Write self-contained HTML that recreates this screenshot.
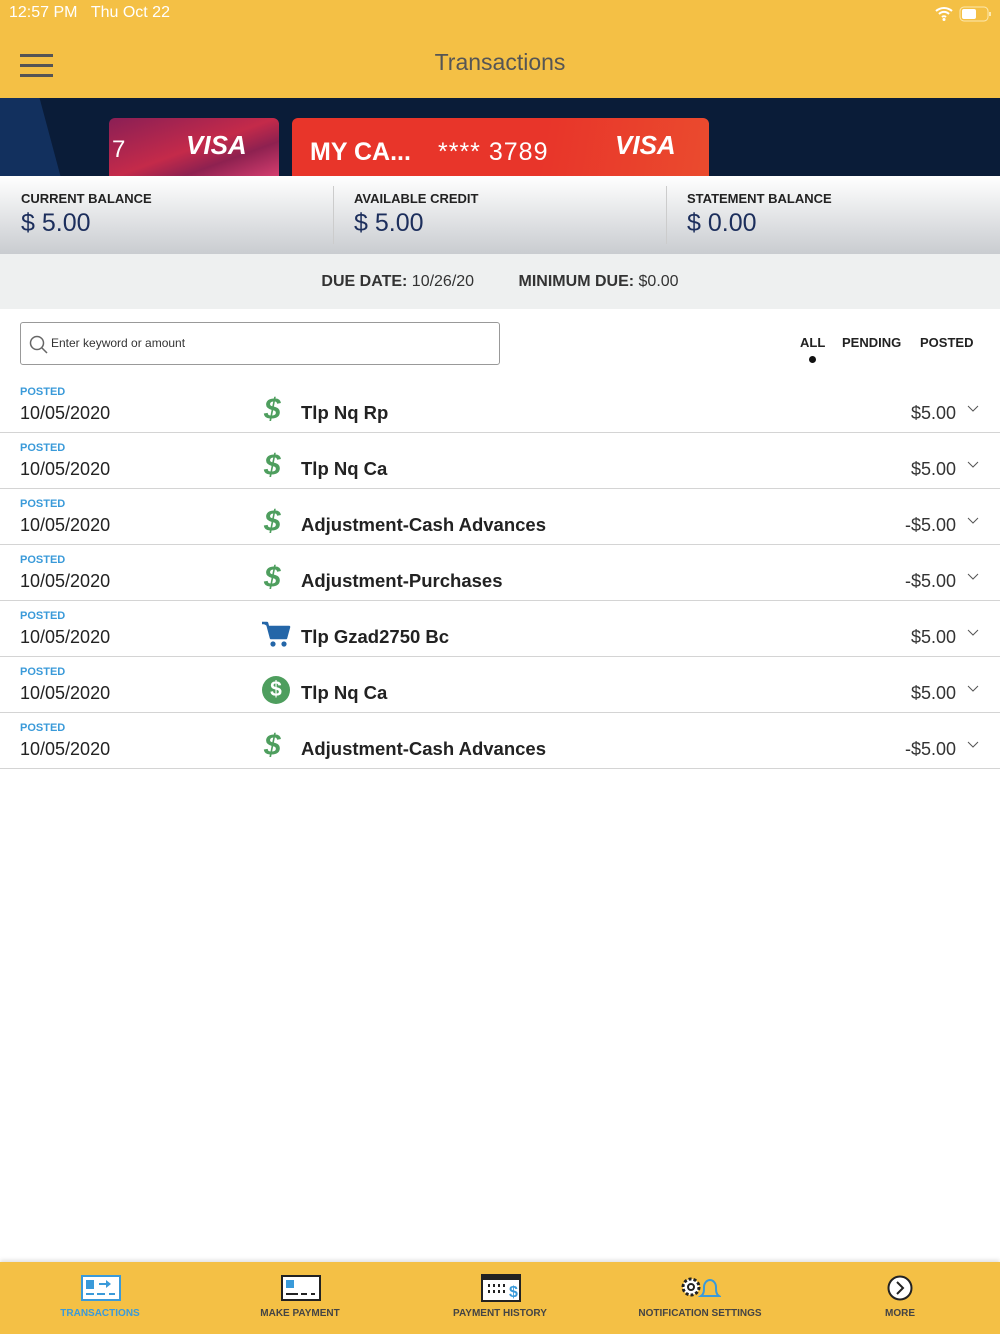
<!DOCTYPE html>
<html><head><meta charset="utf-8"><style>
*{margin:0;padding:0;box-sizing:border-box}
body{width:1000px;height:1334px;position:relative;background:#fff;font-family:"Liberation Sans",Arial,sans-serif;overflow:hidden}
.abs{position:absolute}
.hdr{left:0;top:0;width:1000px;height:98px;background:#F4C045}
.banner{left:0;top:98px;width:1000px;height:78px;background:#0A1C38;overflow:hidden}
.bal{left:0;top:176px;width:1000px;height:78px;background:linear-gradient(#fff,#c9ccd0)}
.due{left:0;top:254px;width:1000px;height:55px;background:#EEF0F0;text-align:center;font-size:16px;color:#333;line-height:55px}
.lbl{font-size:13px;font-weight:bold;color:#222;position:absolute;top:15px}
.amt{font-size:25px;color:#1C2E5C;position:absolute;top:33px}
.row{left:0;width:1000px;height:56px;border-bottom:1px solid #d4d4d4}
.st{position:absolute;left:20px;top:9px;font-size:11px;font-weight:bold;color:#3A9AD9}
.dt{position:absolute;left:20px;top:26px;font-size:18px;color:#222}
.nm{position:absolute;left:301px;top:25px;font-size:18.5px;font-weight:bold;color:#222}
.am{position:absolute;right:44px;top:26px;font-size:18px;color:#333}
.chev{position:absolute;right:21px;top:28px}
.ic{position:absolute;left:264px;top:19px;font-size:30px;font-weight:bold;font-style:italic;color:#4E9E5E;line-height:28px}
.tab{position:absolute;top:1308px;font-size:10px;font-weight:bold;color:#444;text-align:center;width:200px}
</style></head><body>
<div class="abs hdr">
 <div class="abs" style="left:9px;top:4px;font-size:16px;color:#fff">12:57 PM&nbsp;&nbsp;&nbsp;Thu Oct 22</div>
 <svg class="abs" style="left:934px;top:5px" width="60" height="18"><path d="M2 6a12 12 0 0 1 16 0M5 9a7 7 0 0 1 10 0M8 12a3 3 0 0 1 4 0" stroke="#fff" stroke-width="2" fill="none"/><circle cx="10" cy="14.5" r="1.5" fill="#fff"/><rect x="26" y="2" width="28" height="14" rx="4" stroke="#fde9b0" fill="none"/><rect x="28" y="4" width="14" height="10" rx="2" fill="#fff"/><rect x="55" y="7" width="2" height="4" fill="#fde9b0"/></svg>
 <div class="abs" style="left:20px;top:54px;width:33px;height:3px;background:#555;box-shadow:0 10px 0 #555,0 20px 0 #555"></div>
 <div class="abs" style="left:0;width:1000px;top:49px;text-align:center;font-size:23px;color:#555">Transactions</div>
</div>
<div class="abs banner">
 <div class="abs" style="left:-40px;top:0;width:90px;height:78px;background:#12305E;transform:skewX(15deg)"></div>
 <div class="abs" style="left:109px;top:20px;width:170px;height:60px;border-radius:6px 6px 0 0;background:linear-gradient(160deg,#8a1f55,#c42a4a 50%,#8e2150 70%,#d83f70)"></div>
 <div class="abs" style="left:112px;top:38px;font-size:24px;color:#fff">7</div>
 <div class="abs" style="left:186px;top:32px;font-size:26px;font-weight:bold;font-style:italic;color:#fff">VISA</div>
 <div class="abs" style="left:292px;top:20px;width:417px;height:60px;border-radius:6px 6px 0 0;background:linear-gradient(100deg,#E8352A,#E8352A 60%,#EA4B2E)"></div>
 <div class="abs" style="left:310px;top:40px;font-size:25px;font-weight:bold;color:#fff">MY CA...</div>
 <div class="abs" style="left:438px;top:40px;font-size:25px;color:#fff;letter-spacing:1px">**** 3789</div>
 <div class="abs" style="left:615px;top:32px;font-size:26px;font-weight:bold;font-style:italic;color:#fff">VISA</div>
</div>
<div class="abs bal">
 <div class="lbl" style="left:21px">CURRENT BALANCE</div><div class="amt" style="left:21px">$ 5.00</div>
 <div class="abs" style="left:333px;top:10px;width:1px;height:58px;background:#ccc"></div>
 <div class="lbl" style="left:354px">AVAILABLE CREDIT</div><div class="amt" style="left:354px">$ 5.00</div>
 <div class="abs" style="left:666px;top:10px;width:1px;height:58px;background:#ccc"></div>
 <div class="lbl" style="left:687px">STATEMENT BALANCE</div><div class="amt" style="left:687px">$ 0.00</div>
</div>
<div class="abs due"><b>DUE DATE:</b> 10/26/20 &nbsp;&nbsp;&nbsp;&nbsp;&nbsp;&nbsp;&nbsp;&nbsp;&nbsp;<b>MINIMUM DUE:</b> $0.00</div>
<div class="abs" style="left:20px;top:322px;width:480px;height:43px;border:1px solid #999;border-radius:3px">
 <svg class="abs" style="left:8px;top:12px" width="20" height="20"><circle cx="8" cy="8" r="6.5" stroke="#666" stroke-width="1.5" fill="none"/><path d="M13 13l5 5" stroke="#666" stroke-width="1.5"/></svg>
 <div class="abs" style="left:30px;top:13px;font-size:12px;color:#333">Enter keyword or amount</div>
</div>
<div class="abs" style="left:800px;top:335px;font-size:13px;font-weight:bold;color:#222">ALL</div>
<div class="abs" style="left:809px;top:356px;width:7px;height:7px;border-radius:50%;background:#111"></div>
<div class="abs" style="left:842px;top:335px;font-size:13px;font-weight:bold;color:#222">PENDING</div>
<div class="abs" style="left:920px;top:335px;font-size:13px;font-weight:bold;color:#222">POSTED</div>

<div class="abs row" style="top:377px"><div class="st">POSTED</div><div class="dt">10/05/2020</div><div class="ic">$</div><div class="nm">Tlp Nq Rp</div><div class="am">$5.00</div><svg class="chev" width="12" height="8"><path d="M1 1l5 5 5-5" stroke="#555" fill="none"/></svg></div>
<div class="abs row" style="top:433px"><div class="st">POSTED</div><div class="dt">10/05/2020</div><div class="ic">$</div><div class="nm">Tlp Nq Ca</div><div class="am">$5.00</div><svg class="chev" width="12" height="8"><path d="M1 1l5 5 5-5" stroke="#555" fill="none"/></svg></div>
<div class="abs row" style="top:489px"><div class="st">POSTED</div><div class="dt">10/05/2020</div><div class="ic">$</div><div class="nm">Adjustment-Cash Advances</div><div class="am">-$5.00</div><svg class="chev" width="12" height="8"><path d="M1 1l5 5 5-5" stroke="#555" fill="none"/></svg></div>
<div class="abs row" style="top:545px"><div class="st">POSTED</div><div class="dt">10/05/2020</div><div class="ic">$</div><div class="nm">Adjustment-Purchases</div><div class="am">-$5.00</div><svg class="chev" width="12" height="8"><path d="M1 1l5 5 5-5" stroke="#555" fill="none"/></svg></div>
<div class="abs row" style="top:601px"><div class="st">POSTED</div><div class="dt">10/05/2020</div>
 <svg class="abs" style="left:261px;top:19px" width="30" height="28"><path d="M1 3h5l4 15h15l3-11H8" fill="#2466A8" stroke="#2466A8" stroke-width="2.5" stroke-linejoin="round"/><circle cx="12" cy="24" r="2.6" fill="#2466A8"/><circle cx="23" cy="24" r="2.6" fill="#2466A8"/></svg>
 <div class="nm">Tlp Gzad2750 Bc</div><div class="am">$5.00</div><svg class="chev" width="12" height="8"><path d="M1 1l5 5 5-5" stroke="#555" fill="none"/></svg></div>
<div class="abs row" style="top:657px"><div class="st">POSTED</div><div class="dt">10/05/2020</div>
 <div class="abs" style="left:262px;top:19px;width:28px;height:28px;border-radius:50%;background:#4E9E5E;color:#fff;font-size:21px;font-weight:bold;text-align:center;line-height:28px">$</div>
 <div class="nm">Tlp Nq Ca</div><div class="am">$5.00</div><svg class="chev" width="12" height="8"><path d="M1 1l5 5 5-5" stroke="#555" fill="none"/></svg></div>
<div class="abs row" style="top:713px"><div class="st">POSTED</div><div class="dt">10/05/2020</div><div class="ic">$</div><div class="nm">Adjustment-Cash Advances</div><div class="am">-$5.00</div><svg class="chev" width="12" height="8"><path d="M1 1l5 5 5-5" stroke="#555" fill="none"/></svg></div>

<div class="abs" style="left:0;top:1262px;width:1000px;height:72px;background:#F4C045;box-shadow:0 -2px 4px rgba(0,0,0,0.12)"></div>
<svg class="abs" style="left:81px;top:1275px" width="40" height="26"><rect x="1" y="1" width="38" height="24" fill="#fff" stroke="#3A9AD9" stroke-width="2"/><rect x="5" y="5" width="8" height="9" fill="#3A9AD9"/><path d="M18 8h7V5l5 4-5 4v-3h-7z" fill="#3A9AD9"/><path d="M5 19h8M16 19h8M28 19h6" stroke="#3A9AD9" stroke-width="2"/></svg>
<svg class="abs" style="left:281px;top:1275px" width="40" height="26"><rect x="1" y="1" width="38" height="24" fill="#fff" stroke="#222" stroke-width="2"/><rect x="5" y="5" width="8" height="8" fill="#3A9AD9"/><path d="M5 19h12M20 19h6M30 19h4" stroke="#222" stroke-width="2"/></svg>
<svg class="abs" style="left:481px;top:1274px" width="40" height="28"><rect x="1" y="1" width="38" height="26" fill="#fff" stroke="#222" stroke-width="2"/><rect x="1" y="1" width="38" height="5" fill="#222"/><g fill="#222"><rect x="7" y="10" width="2" height="3"/><rect x="12" y="10" width="2" height="3"/><rect x="17" y="10" width="2" height="3"/><rect x="22" y="10" width="2" height="3"/><rect x="7" y="16" width="2" height="3"/><rect x="12" y="16" width="2" height="3"/><rect x="17" y="16" width="2" height="3"/><rect x="22" y="16" width="2" height="3"/></g><text x="28" y="23" font-size="16" font-weight="bold" fill="#3A9AD9" font-family="Liberation Sans">$</text></svg>
<svg class="abs" style="left:679px;top:1274px" width="42" height="28"><circle cx="12" cy="13" r="8" fill="#fff" stroke="#222" stroke-width="3" stroke-dasharray="3 2"/><circle cx="12" cy="13" r="3" fill="none" stroke="#222" stroke-width="2"/><path d="M22 22c3-2 3-5 3-9s3-7 6-7 6 3 6 7 0 7 3 9z" fill="none" stroke="#3A9AD9" stroke-width="2"/></svg>
<svg class="abs" style="left:886px;top:1275px" width="28" height="26"><circle cx="14" cy="13" r="11.5" fill="#fff" stroke="#222" stroke-width="2"/><path d="M11 7l6 6-6 6" stroke="#222" stroke-width="2" fill="none"/></svg>
<div class="tab" style="left:0;color:#3A9AD9">TRANSACTIONS</div>
<div class="tab" style="left:200px">MAKE PAYMENT</div>
<div class="tab" style="left:400px">PAYMENT HISTORY</div>
<div class="tab" style="left:600px">NOTIFICATION SETTINGS</div>
<div class="tab" style="left:800px">MORE</div>
</body></html>
